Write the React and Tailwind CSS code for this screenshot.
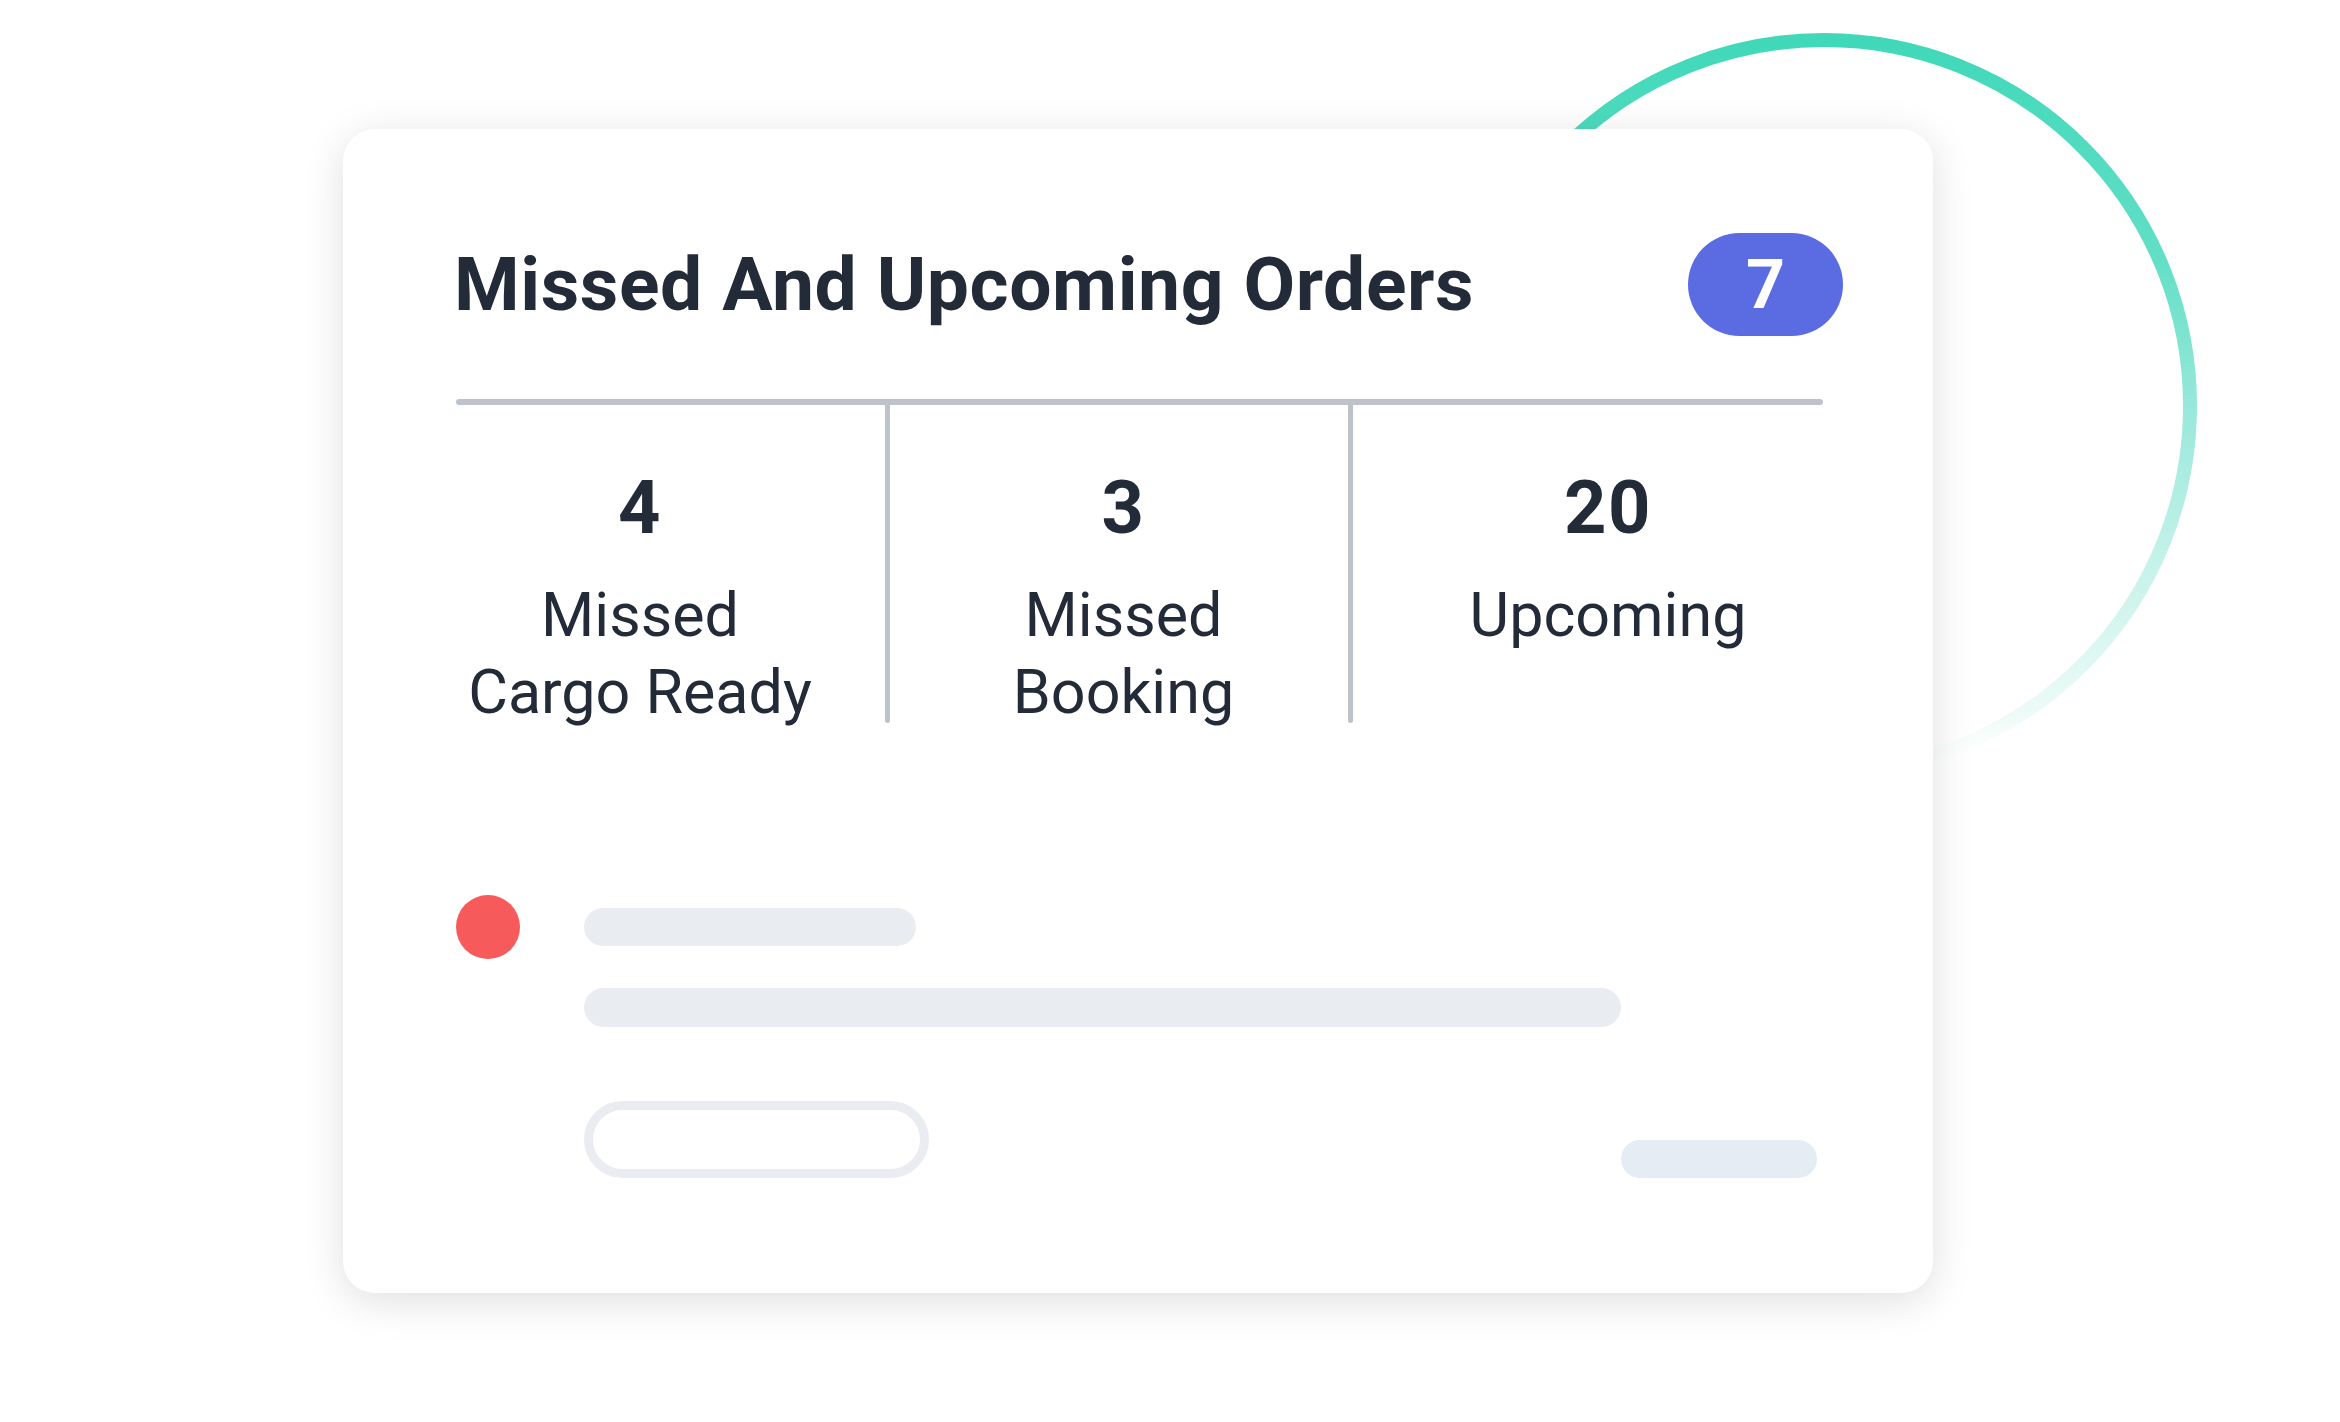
import React from "react";

function Stat({ value, lines, className }) {
  return (
    <div className={"flex flex-col items-center text-center " + className}>
      <div className="mt-[66px] text-[74px] font-bold leading-none text-[#232a38] tracking-[0.02em]">{value}</div>
      <div className="mt-[32px] text-[61px] leading-[77px] font-normal text-[#232a38]">
        {lines.map((l) => (
          <div key={l}>{l}</div>
        ))}
      </div>
    </div>
  );
}

export default function App() {
  return (
    <div className="relative w-[2340px] h-[1422px] bg-white overflow-hidden font-[Roboto,'Liberation_Sans',sans-serif]">
      <svg
        className="absolute left-0 top-0 pointer-events-none"
        width="2340"
        height="1422"
        viewBox="0 0 2340 1422"
      >
        <defs>
          <linearGradient id="ring" gradientUnits="userSpaceOnUse" x1="1824" y1="36" x2="1824" y2="776">
            <stop offset="0" stopColor="#40d8b9" />
            <stop offset="0.3" stopColor="#62dfc6" />
            <stop offset="0.5" stopColor="#98e8da" />
            <stop offset="0.75" stopColor="#cdf4ec" />
            <stop offset="0.92" stopColor="#eefbf8" />
            <stop offset="1" stopColor="#ffffff" stopOpacity="0" />
          </linearGradient>
        </defs>
        <circle cx="1824" cy="406" r="366" fill="none" stroke="url(#ring)" strokeWidth="14" />
      </svg>

      <div className="relative z-10 ml-[343px] mt-[129px] w-[1590px] h-[1164px] bg-white rounded-[32px] shadow-[0_8px_40px_rgba(0,0,0,0.13)] pt-[104px] pl-[113px] pr-[90px] flex flex-col">
        <div className="flex items-center justify-between h-[103px]">
          <h1 className="text-[75px] font-bold leading-none text-[#232a38] tracking-[0.008em] -ml-[2px]">
            Missed And Upcoming Orders
          </h1>
          <div className="w-[155px] h-[103px] rounded-full bg-[#5b6ce3] flex items-center justify-center text-white text-[68px] font-bold leading-none">
            7
          </div>
        </div>

        <div className="mt-[63px] w-[1367px]">
          <div className="h-[6px] rounded-full bg-[#bec3cb]" />
          <div className="flex items-start">
            <Stat value="4" lines={["Missed", "Cargo Ready"]} className="w-[429px] pr-[61px]" />
            <div className="w-[5px] h-[318px] rounded-b-full bg-[#bec3cb] shrink-0" />
            <Stat value="3" lines={["Missed", "Booking"]} className="w-[458px] pl-[9px]" />
            <div className="w-[5px] h-[318px] rounded-b-full bg-[#bec3cb] shrink-0" />
            <Stat value="20" lines={["Upcoming"]} className="w-[470px] pl-[40px]" />
          </div>
        </div>

        <div className="mt-[164px] flex gap-[64px]">
          <div className="w-[64px] h-[64px] rounded-full bg-[#f75a5a] shrink-0" />
          <div className="flex flex-col w-[1239px]">
            <div className="mt-[13px] w-[332px] h-[38px] rounded-full bg-[#e9edf2]" />
            <div className="mt-[42px] w-[1037px] h-[39px] rounded-full bg-[#e9edf2]" />
            <div className="mt-[74px] flex items-end justify-between pr-[6px]">
              <div className="w-[345px] h-[77px] rounded-full border-[9px] border-[#e9edf2]" />
              <div className="w-[196px] h-[38px] rounded-full bg-[#e6ecf3]" />
            </div>
          </div>
        </div>
      </div>
    </div>
  );
}
